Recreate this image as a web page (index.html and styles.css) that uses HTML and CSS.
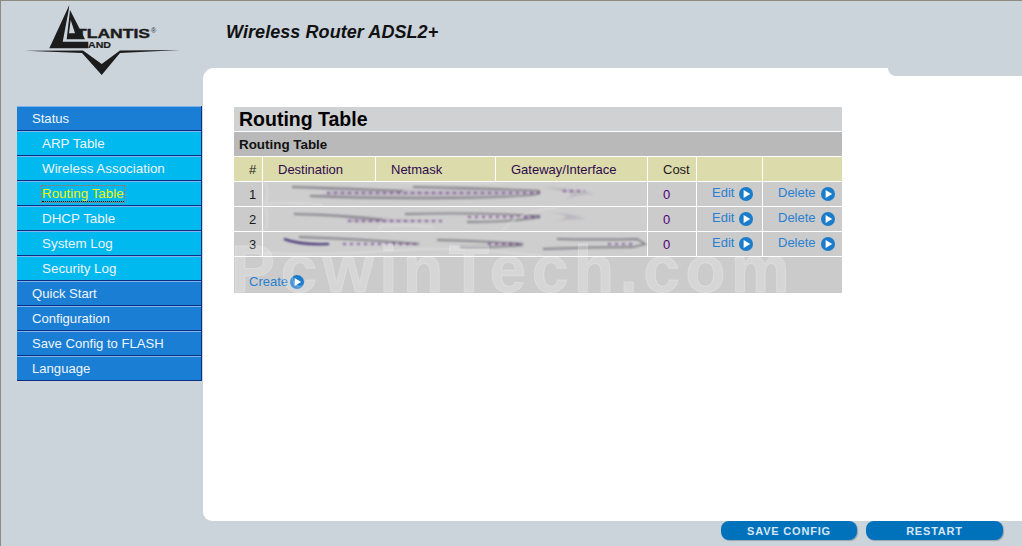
FILE: index.html
```html
<!DOCTYPE html>
<html lang="en">
<head>
  <meta charset="UTF-8">
  <title>Wireless Router ADSL2+</title>
  <link rel="stylesheet" href="styles.css">
</head>
<body>
  <svg class="defs" width="0" height="0">
    <symbol id="go" viewBox="0 0 14 14">
      <circle cx="7" cy="7" r="7" fill="#1a7cca"/>
      <path d="M4.6 3 L11.2 7 L4.6 11 Z" fill="#fff"/>
    </symbol>
  </svg>
  <div class="page">
    <header class="header">
      <svg class="logo" width="165" height="76" viewBox="0 0 165 76">
        <path d="M48.3 1 L28.3 44.300 L67.3 44.300 L67.3 37.700 L41.700 37.700 L47.700 6 Z" fill="#1c1c1c"/>
        <path fill-rule="evenodd" d="M49 6 L64 35.300 L45.700 35.300 Z M49.700 16 L48 29.300 L54 29.300 Z" fill="#1c1c1c"/>
        <text class="logo-big" x="55" y="33.700" textLength="74" lengthAdjust="spacingAndGlyphs">TLANTIS</text>
        <text class="logo-mark" x="130" y="29">®</text>
        <text class="logo-small" x="67" y="43.700" textLength="23" lengthAdjust="spacingAndGlyphs">AND</text>
        <path d="M4 46.700 L62 46.500 L80.700 60 L99 46.500 L159 46 L99 49 L80.700 71 L61 49 Z" fill="#1c1c1c"/>
      </svg>
      <h1 class="product">Wireless Router ADSL2+</h1>
    </header>
    <div class="main">
      <nav class="menu">
        <a class="menu-item">Status</a>
        <a class="menu-item sub">ARP Table</a>
        <a class="menu-item sub">Wireless Association</a>
        <a class="menu-item sub"><span class="current">Routing Table</span></a>
        <a class="menu-item sub">DHCP Table</a>
        <a class="menu-item sub">System Log</a>
        <a class="menu-item sub">Security Log</a>
        <a class="menu-item">Quick Start</a>
        <a class="menu-item">Configuration</a>
        <a class="menu-item">Save Config to FLASH</a>
        <a class="menu-item">Language</a>
      </nav>
      <section class="panel">
        <div class="content">
          <h2 class="title">Routing Table</h2>
          <h3 class="subtitle">Routing Table</h3>
          <table class="routes">
            <colgroup>
              <col class="c-num"><col class="c-dest"><col class="c-mask"><col class="c-gate"><col class="c-cost"><col class="c-edit"><col class="c-del">
            </colgroup>
            <thead>
              <tr>
                <th class="num-col">#</th>
                <th>Destination</th>
                <th>Netmask</th>
                <th>Gateway/Interface</th>
                <th>Cost</th>
                <th></th>
                <th></th>
              </tr>
            </thead>
            <tbody>
              <tr>
                <td class="num-col">1</td>
                <td colspan="3" class="blur">
                  <svg width="384" height="24" viewBox="0 0 384 24">
                    <g fill="none">
                      <path class="haze" d="M29 5 Q100 7 175 8 Q230 4 277 9 Q240 16 190 16 Q110 17 47 14 Q80 10 60 8 Z"/>
                      <path class="edge" d="M29 5 Q80 6 140 9 M47 14 Q110 17 190 16 T277 11 M150 5 Q220 6 277 9"/>
                      <path class="dots" d="M64 11 L277 11"/>
                      <path class="haze" d="M280 5 Q312 6 332 12 Q315 12 300 18 Q315 12 302 10 Z"/>
                      <path class="dots" d="M300 9 L322 9"/>
                      <path class="trace" d="M3 0 Q6 12 3 22 M0 22 Q30 19 60 23 M130 0 Q200 2 240 0"/>
                    </g>
                  </svg>
                </td>
                <td class="num">0</td>
                <td class="act"><a class="link">Edit</a><svg class="go"><use href="#go"/></svg></td>
                <td class="act"><a class="link">Delete</a><svg class="go"><use href="#go"/></svg></td>
              </tr>
              <tr>
                <td class="num-col">2</td>
                <td colspan="3" class="blur">
                  <svg width="384" height="24" viewBox="0 0 384 24">
                    <g fill="none">
                      <path class="haze" d="M31 7 Q90 7 130 12 L183 14 Q130 16 85 15 Q100 10 31 7 Z"/>
                      <path class="edge" d="M31 7 Q80 8 120 13 M142 7 Q210 5 277 9 M204 15 Q250 15 277 10"/>
                      <path class="dots" d="M85 14 L183 14 M205 10 L277 10"/>
                      <path class="haze" d="M287 6 Q312 6 322 12 Q305 12 290 15 Q308 11 300 8 Z"/>
                      <path class="trace" d="M3 0 Q6 12 3 22 M118 24 Q112 19 125 18 Q150 18 170 20 M295 0 Q250 6 240 24"/>
                    </g>
                  </svg>
                </td>
                <td class="num">0</td>
                <td class="act"><a class="link">Edit</a><svg class="go"><use href="#go"/></svg></td>
                <td class="act"><a class="link">Delete</a><svg class="go"><use href="#go"/></svg></td>
              </tr>
              <tr>
                <td class="num-col">3</td>
                <td colspan="3" class="blur">
                  <svg width="384" height="24" viewBox="0 0 384 24">
                    <g fill="none">
                      <path class="arc" d="M21 7 Q36 13 66 12"/>
                      <path class="edge" d="M36 5 Q100 7 156 12 M174 8 Q220 9 260 12 M197 15 Q230 16 260 13"/>
                      <path class="dots" d="M80 12 L156 12 M225 12 L260 12 M345 12 L372 12"/>
                      <path class="edge" d="M294 7 Q340 8 374 7 L382 12 L370 15 Q330 15 280 17"/>
                      <path class="trace" d="M0 21 Q60 24 140 18 Q190 14 280 24 M384 0 Q387 12 384 24"/>
                    </g>
                  </svg>
                </td>
                <td class="num">0</td>
                <td class="act"><a class="link">Edit</a><svg class="go"><use href="#go"/></svg></td>
                <td class="act"><a class="link">Delete</a><svg class="go"><use href="#go"/></svg></td>
              </tr>
            </tbody>
          </table>
          <div class="create"><a class="link">Create</a><svg class="go"><use href="#go"/></svg></div>
          <div class="watermark">PcwinTech.com</div>
        </div>
      </section>
    </div>
    <footer class="footer">
      <button class="btn btn-save">SAVE CONFIG</button>
      <button class="btn">RESTART</button>
    </footer>
  </div>
</body>
</html>
```
FILE: styles.css
```css
* {
  box-sizing: border-box;
}
html, body {
  margin: 0;
  height: 100%;
}
body {
  background-color: #cbd3db;
  font-family: "Liberation Sans", Arial, sans-serif;
  overflow: hidden;
}
.defs {
  position: absolute;
}
.page {
  height: 546px;
  display: flex;
  flex-direction: column;
  border-top: 1px solid #8c8b7e;
  border-left: 1px solid #8c8b7e;
}

/* header */
.header {
  height: 67px;
  display: flex;
  align-items: flex-start;
  padding-left: 20px;
}
.logo {
  margin-top: 3px;
  flex: none;
}
.logo-big {
  font: bold 13px "Liberation Sans", sans-serif;
  fill: #1c1c1c;
  stroke: #1c1c1c;
  stroke-width: 0.4px;
}
.logo-small {
  font: bold 8.5px "Liberation Sans", sans-serif;
  fill: #1c1c1c;
  stroke: #1c1c1c;
  stroke-width: 0.2px;
}
.logo-mark {
  font: 7px "Liberation Sans", sans-serif;
  fill: #333;
}
.product {
  margin: 20px 0 0 40px;
  font-size: 18px;
  font-weight: bold;
  font-style: italic;
  color: #111;
  line-height: 22px;
  letter-spacing: 0.07px;
}

/* left menu + white panel */
.main {
  flex: 1;
  display: flex;
  align-items: stretch;
  padding-left: 16px;
}
.menu {
  width: 185px;
  margin-top: 38px;
  align-self: flex-start;
  border-right: 1px solid #0b2f86;
}
.menu-item {
  display: block;
  height: 25px;
  line-height: 24px;
  padding-left: 15px;
  font-size: 13.1px;
  color: #f0f4fa;
  background-color: #1a7fd4;
  border-top: 1px solid #82b4ec;
  border-bottom: 1px solid #0b2f86;
}
.menu-item.sub {
  padding-left: 25px;
  font-size: 13.400px;
  background-color: #00b9ee;
}
.current {
  display: inline-block;
  line-height: 15px;
  color: #f4f400;
  outline: 1px dotted #d85a30;
  border-bottom: 1px dotted #000;
}
.panel {
  position: relative;
  flex: 1;
  margin-left: 1px;
  background-color: #fff;
  border-top-left-radius: 11px;
  border-bottom-left-radius: 9px;
  padding: 39px 0 0 31px;
  overflow: hidden;
}
.panel::after {
  content: "";
  position: absolute;
  top: 0;
  right: 0;
  width: 134px;
  height: 8px;
  background-color: #cbd3db;
  border-bottom-left-radius: 9px;
}

/* routing table */
.content {
  position: relative;
  width: 608px;
  height: 186px;
}
.title {
  margin: 0 0 1px;
  height: 24px;
  line-height: 25px;
  padding-left: 5px;
  font-size: 19.500px;
  font-weight: bold;
  color: #000;
  background-color: #d0d1d3;
}
.subtitle {
  margin: 0 0 1px;
  height: 24px;
  line-height: 25px;
  padding-left: 5px;
  font-size: 13.400px;
  font-weight: bold;
  color: #111;
  background-color: #b9b9b9;
}
.routes {
  width: 608px;
  table-layout: fixed;
  border-collapse: separate;
  border-spacing: 0;
  font-size: 13px;
}
.c-num { width: 29px; }
.c-dest { width: 113px; }
.c-mask { width: 120px; }
.c-gate { width: 152px; }
.c-cost { width: 49px; }
.c-edit { width: 66px; }
.c-del { width: 79px; }
.routes th, .routes td {
  height: 25px;
  padding: 0 0 0 15px;
  border-right: 1px solid #fff;
  border-bottom: 1px solid #fff;
}
.routes th:last-child, .routes td:last-child {
  border-right: 0;
}
.routes th {
  text-align: left;
  font-weight: normal;
  color: #2e0a4e;
  background-color: #dcdbab;
}
.routes th:nth-child(5) {
  color: #1a1a1a;
}
.routes td {
  color: #222;
  background-color: #cbcbcb;
}
.routes .num-col {
  text-align: left;
  padding-left: 15px;
  color: #1a1a1a;
}
.routes td.num {
  color: #50007a;
  padding-left: 15px;
}
.routes td.blur {
  padding: 0;
  background-color: #cecece;
}
.blur svg {
  display: block;
  filter: blur(0.8px);
}
.haze {
  fill: #bcb9c0;
}
.edge {
  stroke: #85838a;
  stroke-width: 1.800px;
}
.dots {
  stroke: #6f3a90;
  stroke-width: 1.600px;
  stroke-dasharray: 3 4;
}
.arc {
  stroke: #3b2a70;
  stroke-width: 2px;
}
.trace {
  stroke: #e4e4e4;
  stroke-width: 1px;
}
.act {
  white-space: nowrap;
}
.link {
  color: #2a7fd0;
  cursor: pointer;
  position: relative;
  top: -2px;
}
.go {
  width: 14px;
  height: 14px;
  margin-left: 5px;
  vertical-align: -2px;
}
.create {
  height: 36px;
  padding: 17px 0 0 15px;
  font-size: 13px;
  line-height: 16px;
  background-color: #cbcbcb;
}
.create .link {
  top: 0;
}
.create .go {
  margin-left: 2px;
  vertical-align: -3px;
}
.watermark {
  position: absolute;
  left: -3px;
  top: 138px;
  font-size: 66px;
  font-weight: bold;
  line-height: 48px;
  letter-spacing: 5.400px;
  white-space: nowrap;
  color: rgba(255, 255, 255, 0.22);
  -webkit-text-stroke: 1px rgba(255, 255, 255, 0.22);
  pointer-events: none;
}

/* bottom buttons */
.footer {
  height: 25px;
  display: flex;
  justify-content: flex-end;
  align-items: flex-start;
  gap: 9px;
  padding-right: 19px;
}
.btn {
  width: 137px;
  height: 19px;
  padding: 0;
  border: 0;
  border-radius: 8px;
  font: bold 11px "Liberation Sans", Arial, sans-serif;
  letter-spacing: 0.8px;
  color: #d6e6f3;
  background-color: #0072bc;
  box-shadow: 1px 1px 1px #9aa3ab;
}
.btn-save {
  width: 136px;
}
```
